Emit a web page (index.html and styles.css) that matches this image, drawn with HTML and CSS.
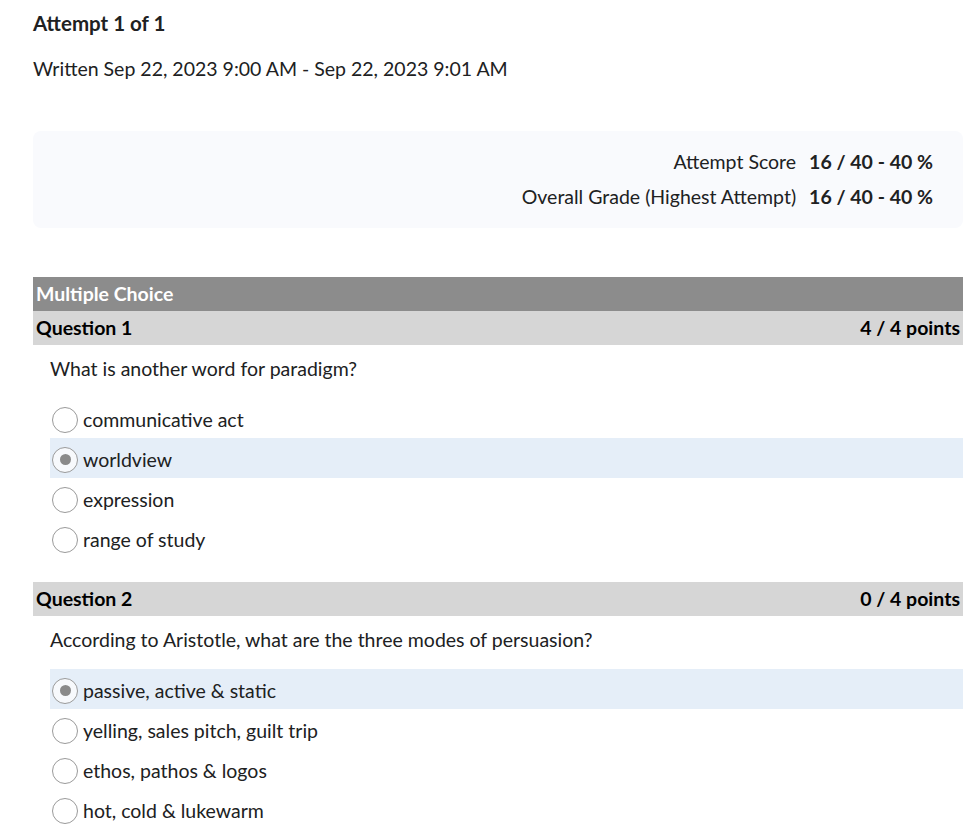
FILE: index.html
```html
<!DOCTYPE html>
<html lang="en">
<head>
    <meta charset="UTF-8">
    <meta name="viewport" content="width=device-width, initial-scale=1.0">
    <title>Quiz Attempt</title>
    <link rel="stylesheet" href="styles.css">
</head>
<body>
    <div class="page">
        <!-- Attempt summary -->
        <h2 class="attempt-title">Attempt 1 of 1</h2>
        <div class="attempt-date">Written Sep 22, 2023 9:00 AM - Sep 22, 2023 9:01 AM</div>

        <div class="score-box">
            <div class="score-row">
                <span class="score-label">Attempt Score</span>
                <span class="score-value">16 / 40 - 40 %</span>
            </div>
            <div class="score-row">
                <span class="score-label">Overall Grade (Highest Attempt)</span>
                <span class="score-value">16 / 40 - 40 %</span>
            </div>
        </div>

        <!-- Questions -->
        <div class="section-head">Multiple Choice</div>

        <div class="question-head">
            <span>Question 1</span>
            <span>4 / 4 points</span>
        </div>
        <div class="question-text">What is another word for paradigm?</div>
        <div class="options">
            <div class="option"><span class="radio"></span>communicative act</div>
            <div class="option selected"><span class="radio"></span>worldview</div>
            <div class="option"><span class="radio"></span>expression</div>
            <div class="option"><span class="radio"></span>range of study</div>
        </div>

        <div class="question-head">
            <span>Question 2</span>
            <span>0 / 4 points</span>
        </div>
        <div class="question-text">According to Aristotle, what are the three modes of persuasion?</div>
        <div class="options">
            <div class="option selected"><span class="radio"></span>passive, active &amp; static</div>
            <div class="option"><span class="radio"></span>yelling, sales pitch, guilt trip</div>
            <div class="option"><span class="radio"></span>ethos, pathos &amp; logos</div>
            <div class="option"><span class="radio"></span>hot, cold &amp; lukewarm</div>
        </div>
    </div>
</body>
</html>
```

FILE: styles.css
```css
/* Basic styles */
* {
    box-sizing: border-box;
}

body {
    font-family: Lato, "Open Sans", sans-serif;
    color: #202122;
    background: #ffffff;
    margin: 0;
}

.page {
    width: 963px;
    padding: 10px 0 0 33px;
}

.attempt-title {
    font-size: 20.5px;
    font-weight: bold;
    margin: 0;
    line-height: 26px;
}

.attempt-date {
    font-size: 19.5px;
    line-height: 26px;
    margin-top: 20px;
}

.score-box {
    background-color: #f9fafd;
    border-radius: 8px;
    margin-top: 49px;
    padding: 18px 30px 0 0;
    height: 97px;
    display: flex;
    flex-direction: column;
    align-items: flex-end;
    gap: 9px;
}

.score-row {
    display: flex;
    gap: 13px;
    font-size: 19.5px;
    line-height: 26px;
}

.score-value {
    font-weight: bold;
}

.section-head {
    margin-top: 49px;
    background-color: #8c8c8c;
    color: #ffffff;
    font-weight: bold;
    font-size: 19.5px;
    height: 34px;
    line-height: 34px;
    padding-left: 3px;
}

.question-head {
    background-color: #d6d6d6;
    color: #000000;
    font-weight: bold;
    font-size: 19.5px;
    height: 34px;
    line-height: 34px;
    padding: 0 3px;
    display: flex;
    justify-content: space-between;
}

.question-text {
    font-size: 19.5px;
    line-height: 26px;
    padding: 11px 0 0 17px;
    height: 53px;
}

.options {
    padding-left: 17px;
    margin-bottom: 24px;
}

.option {
    display: flex;
    align-items: center;
    height: 40px;
    font-size: 19.5px;
    padding: 3px 0 0 2px;
}

.option.selected {
    background-color: #e5eef8;
}

.radio {
    width: 26px;
    height: 26px;
    border-radius: 50%;
    border: 1px solid #9a9a9a;
    background: #ffffff;
    margin-right: 5px;
    display: flex;
    align-items: center;
    justify-content: center;
}

.option.selected .radio {
    background: #f7f9fc;
}

.option.selected .radio::after {
    content: "";
    width: 11px;
    height: 11px;
    border-radius: 50%;
    background-color: #8a8a8a;
}
```
